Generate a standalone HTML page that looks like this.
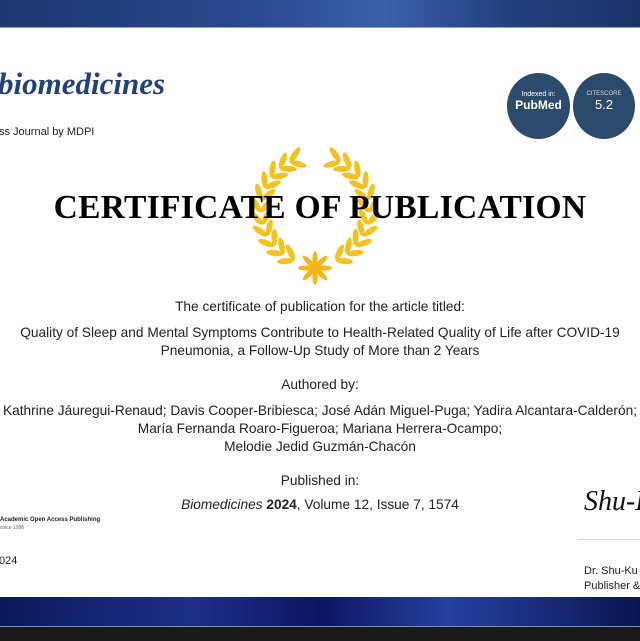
<!DOCTYPE html>
<html><head><meta charset="utf-8"><style>
*{margin:0;padding:0}
body{width:640px;height:640px;overflow:hidden;background:#fff;position:relative;font-family:"Liberation Sans",sans-serif;color:#222}
.t{position:absolute;white-space:nowrap}
.c{left:0;width:640px;text-align:center;font-size:13.7px}
</style></head><body>
<div style="position:absolute;left:0;top:0;width:640px;height:27px;background:linear-gradient(90deg,#1d3570,#2a4a8e 40%,#3b5fa8 60%,#233f7d 80%,#1b3268)"></div>
<div style="position:absolute;left:0;top:27px;width:640px;height:1px;background:#8aa0c8"></div>
<div style="position:absolute;left:0;top:597px;width:640px;height:30px;background:linear-gradient(90deg,#0a1a5a,#1c2f8a 30%,#0c1660 50%,#2440a0 70%,#0a1650)"></div>
<div style="position:absolute;left:0;top:626px;width:640px;height:14px;background:#1a1a1a;border-top:1px solid #8090b0"></div>

<div class="t" style="left:-2px;top:66px;font-family:'Liberation Serif',serif;font-style:italic;font-weight:bold;font-size:31px;color:#22407a">biomedicines</div>
<div class="t" style="left:-1px;top:126px;font-size:11px;color:#222">ss Journal by MDPI</div>

<div style="position:absolute;left:507px;top:73px;width:63px;height:66px;border-radius:50%;background:#2c4a6c;color:#fff;text-align:center">
<div style="font-size:7px;margin-top:18px">Indexed in:</div><div style="font-size:12px;font-weight:bold">PubMed</div></div>
<div style="position:absolute;left:573px;top:73px;width:62px;height:66px;border-radius:50%;background:#2c4a6c;color:#fff;text-align:center">
<div style="font-size:6px;margin-top:18px;color:#cfd8e4">CITESCORE</div><div style="font-size:13px">5.2</div></div>

<svg id="w" style="position:absolute;left:0;top:0" width="640" height="640"></svg>

<div class="t" style="left:0;width:640px;text-align:center;top:189px;font-family:'Liberation Serif',serif;font-weight:bold;font-size:33.5px;color:#000;letter-spacing:0.3px">CERTIFICATE OF PUBLICATION</div>

<div class="t c" style="top:299px">The certificate of publication for the article titled:</div>
<div class="t c" style="top:325px">Quality of Sleep and Mental Symptoms Contribute to Health-Related Quality of Life after COVID-19</div>
<div class="t c" style="top:343px">Pneumonia, a Follow-Up Study of More than 2 Years</div>
<div class="t c" style="top:377px">Authored by:</div>
<div class="t c" style="top:403px">Kathrine Jáuregui-Renaud; Davis Cooper-Bribiesca; José Adán Miguel-Puga; Yadira Alcantara-Calderón;</div>
<div class="t c" style="top:421px">María Fernanda Roaro-Figueroa; Mariana Herrera-Ocampo;</div>
<div class="t c" style="top:439px">Melodie Jedid Guzmán-Chacón</div>
<div class="t c" style="top:473px">Published in:</div>
<div class="t c" style="top:497px"><i>Biomedicines</i> <b>2024</b>, Volume 12, Issue 7, 1574</div>

<div class="t" style="left:0;top:517px;font-size:6px;font-weight:bold;color:#222">Academic Open Access Publishing</div>
<div class="t" style="left:0;top:525px;font-size:5px;color:#666">since 1996</div>
<div class="t" style="left:-1px;top:555px;font-size:11px">024</div>

<div class="t" style="left:584px;top:486px;font-family:'Liberation Serif',serif;font-style:italic;font-size:28px;color:#111">Shu-K</div>
<div style="position:absolute;left:578px;top:539px;width:62px;height:1px;background:#e8d8b0"></div>
<div class="t" style="left:584px;top:565px;font-size:11px">Dr. Shu-Ku</div>
<div class="t" style="left:584px;top:580px;font-size:11px">Publisher &amp;</div>

<script>
var s='',cx=315,cy=210,R=54;
for(var side=-1;side<=1;side+=2){
 for(var i=0;i<11;i++){
  var th=(30+i*13)*Math.PI/180;
  var x=cx+side*R*Math.sin(th),y=cy+R*Math.cos(th);
  var tang=Math.atan2(-Math.sin(th),side*Math.cos(th))*180/Math.PI;
  for(var k=-1;k<=1;k+=2){
   var ox=x+side*k*5*Math.sin(th),oy=y+k*5*Math.cos(th);
   var ang=tang+(k*side*35);
   s+='<ellipse cx="'+ox.toFixed(1)+'" cy="'+oy.toFixed(1)+'" rx="8.5" ry="3" fill="#f5c21c" transform="rotate('+ang.toFixed(1)+' '+ox.toFixed(1)+' '+oy.toFixed(1)+')"/>';
  }
 }
}
for(var a=0;a<8;a++){var ang=a*45;var x=cx+8*Math.cos(ang*Math.PI/180),y=268+8*Math.sin(ang*Math.PI/180);
 s+='<ellipse cx="'+x+'" cy="'+y+'" rx="9" ry="2.6" fill="#f3b818" transform="rotate('+ang+' '+x+' '+y+')"/>';}
document.getElementById('w').innerHTML=s;
</script>
</body></html>
